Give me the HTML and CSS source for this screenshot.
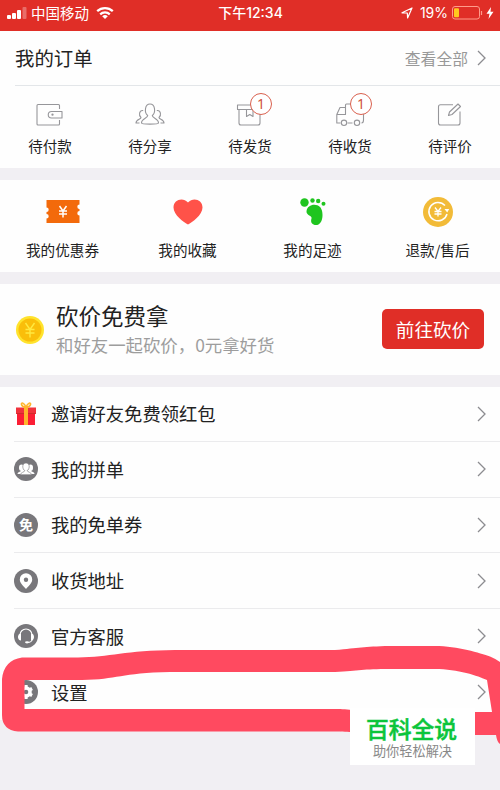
FILE: index.html
```html
<!DOCTYPE html>
<html lang="zh-CN">
<head>
<meta charset="utf-8">
<title>个人中心</title>
<link rel="stylesheet" href="styles.css">
</head>
<body>
<div class="screen">
  <header class="status">
    <div class="status-left">
      <svg width="20" height="12" viewBox="0 0 20 12" fill="#fff"><rect x="0" y="8" width="4" height="4" rx="1"/><rect x="5" y="6" width="4" height="6" rx="1"/><rect x="10" y="3" width="4" height="9" rx="1"/><rect x="15.500" y="0" width="4" height="12" rx="1" opacity=".3"/></svg>
      <span class="carrier">中国移动</span>
      <svg width="18" height="14" viewBox="0 0 18 14" fill="none" stroke="#fff" stroke-width="2.300"><path d="M1.200 5.200a11.500 11.500 0 0 1 15.600 0M4.200 8.300a7.200 7.200 0 0 1 9.600 0"/><path d="M9 13L6.200 10.300a4 4 0 0 1 5.600 0z" fill="#fff" stroke="none"/></svg>
    </div>
    <span class="clock">下午12:34</span>
    <div class="status-right">
      <svg width="12" height="12" viewBox="0 0 12 12" fill="none" stroke="#fff" stroke-width="1.200" stroke-linejoin="round"><path d="M1 5.800L11 1L6.600 11L6.300 6z"/></svg>
      <span class="percent">19%</span>
      <svg width="31" height="14" viewBox="0 0 31 14"><rect x=".5" y=".5" width="27" height="12.500" rx="2.500" fill="none" stroke="#ff9b8b"/><rect x="2" y="2.300" width="5" height="9" rx="1" fill="#ffc81e"/><path d="M29.500 5v4" stroke="#ff9b8b" stroke-width="1.200"/></svg>
      <svg width="8" height="12" viewBox="0 0 8 12"><path d="M5 0L.5 6.700H3.500L2.500 12L7.500 4.800H4.500z" fill="#fff"/></svg>
    </div>
  </header>

  <section class="orders">
    <div class="orders-head">
      <h2>我的订单</h2>
      <a class="all">查看全部<svg class="chevron" viewBox="0 0 9 16"><path d="M1 1l7 7-7 7"/></svg></a>
    </div>
    <div class="order-grid">
      <div class="order"><svg class="line-icon" viewBox="0 0 30 26"><path d="M24.500 7V3.500q0-1-1-1H3q-1 0-1 1v18.500q0 1 1 1h20.500q1 0 1-1v-4M24 9.500h-7.500a3.200 3.200 0 0 0 0 6.500H27V9.500z"/><circle cx="17.500" cy="12.700" r=".6"/></svg><span>待付款</span></div>
      <div class="order"><svg class="line-icon" viewBox="0 0 30 26"><path d="M12.700 13.500C9 10.500 9.800 2 15 2s6 8.500 2.300 11.500c0 3 6.200 2.500 6.200 7.500 0 1.500-17 1.500-17 0 0-5 6.200-4.500 6.200-7.500zM8.200 8.500C4 8 3.500 13.500 6 15.500 6 17.500 1 17 1 21h3.500M21.800 8.500c4.200-.5 4.700 5 2.200 7 0 2 5 1.500 5 5.500h-3.500"/></svg><span>待分享</span></div>
      <div class="order"><svg class="line-icon" viewBox="0 0 30 26"><path d="M2.500 3h24v4.500h-24zM4 7.500V21q0 2 2 2h17q2 0 2-2V7.500M11.500 7.500v7l3.300-2 3.200 2v-7"/></svg><i class="badge">1</i><span>待发货</span></div>
      <div class="order"><svg class="line-icon" viewBox="0 0 30 26"><path d="M5.500 21H1.800v-8.500L5 5.500h5.500V3q0-1 1-1H28.500v16q0 3-2 3M10.500 5.500v7H2M12.500 21h5"/><circle cx="9" cy="20.800" r="2.700"/><circle cx="22" cy="20.800" r="2.700"/></svg><i class="badge">1</i><span>待收货</span></div>
      <div class="order"><svg class="line-icon" viewBox="0 0 30 26"><path d="M18 2.800H5.500q-2 0-2 2V21q0 2 2 2H23q2 0 2-2V9.500M13.500 13.500l1-3.500 8.500-8 2.500 2.500-8.500 8z"/></svg><span>待评价</span></div>
    </div>
  </section>

  <section class="tools">
    <div class="tool"><svg viewBox="0 0 36 32"><path d="M1.500 4h33v4.500a2.200 2.200 0 0 0 0 4.400v2.200a2.200 2.200 0 0 0 0 4.400V27h-33v-4.500a2.200 2.200 0 0 0 0-4.400v-2.200a2.200 2.200 0 0 0 0-4.400z" fill="#f36a0b"/><path d="M14.500 10l3.500 5 3.500-5M14 15h8M14 18h8M18 15v6.500" fill="none" stroke="#fff" stroke-width="1.500"/></svg><span>我的优惠券</span></div>
    <div class="tool"><svg viewBox="0 0 36 32"><path d="M18 28.500C14 26.500 3.500 19 3.500 11.500 3.500 3.500 13 1 18 6.500 23 1 32.500 3.500 32.500 11.500 32.500 19 22 26.500 18 28.500z" fill="#ff5249"/></svg><span>我的收藏</span></div>
    <div class="tool"><svg viewBox="0 0 36 32" fill="#1fc51f"><circle cx="9.500" cy="6.500" r="4.200"/><circle cx="17.500" cy="4.500" r="2.200"/><circle cx="23.200" cy="5" r="2.200"/><circle cx="28.500" cy="7.700" r="2"/><path d="M11.500 15.500C12 8.500 21 7 25 11c4 4 3.500 17-3 18-4 .5-7-2-5.500-6.500 1-3-5.300-3-5-7z"/></svg><span>我的足迹</span></div>
    <div class="tool"><svg viewBox="0 0 36 32"><circle cx="18" cy="16" r="15" fill="#f2bb38"/><path d="M25 9.500A9.200 9.200 0 1 0 27 18" fill="none" stroke="#fff" stroke-width="1.500"/><path d="M24.500 13h4.700l-2 3.500z" fill="#fff"/><path d="M15 11.500l3 4 3-4M14.500 15.500h7M14.500 18h7M18 15.500v5" fill="none" stroke="#fff" stroke-width="1.300"/></svg><span>退款/售后</span></div>
  </section>

  <section class="bargain">
    <svg class="coin" viewBox="0 0 30 30"><circle cx="15" cy="15" r="14" fill="#ffe32d"/><circle cx="15" cy="15" r="11.500" fill="#fabe0a"/><path d="M10.500 8l4.500 6.500L19.500 8M10.500 14.500h9M10.500 18h9M15 14.500V22.500" fill="none" stroke="#ffe940" stroke-width="1.400"/></svg>
    <div class="bargain-text"><h3>砍价免费拿</h3><p>和好友一起砍价，0元拿好货</p></div>
    <button class="go">前往砍价</button>
  </section>

  <section class="menu">
    <div class="item"><svg class="item-icon" viewBox="0 0 24 24"><path d="M2 5.500h20V12H2z" fill="#f0323c"/><path d="M3 12h18v11H3z" fill="#fb1e35"/><path d="M2.500 11.500h19" stroke="#cf2c2c"/><path d="M10 5.500h4V23h-4z" fill="#ffb52c"/><path d="M12 5C10 .5 7 0 7.500 2.500S11 5 12 5.500C13 5 16 5 16.500 2.500S14 .5 12 5z" fill="none" stroke="#ffb52c" stroke-width="1.600"/></svg><span>邀请好友免费领红包</span><svg class="chevron" viewBox="0 0 9 16"><path d="M1 1l7 7-7 7"/></svg></div>
    <div class="item"><svg class="item-icon" viewBox="0 0 24 24"><circle cx="12" cy="12" r="12" fill="#78777b"/><g fill="#fff"><ellipse cx="7.500" cy="10.800" rx="2.500" ry="3.200"/><path d="M3.500 17c0-2.500 4-2 4-4h3v4z"/><ellipse cx="16.500" cy="10.800" rx="2.500" ry="3.200"/><path d="M20.500 17c0-2.500-4-2-4-4h-3v4z"/><path d="M10.700 13.500C7.500 11 8.500 6 12 6s4.500 5 1.300 7.500c0 2 4.200 1.500 4.200 4.200h-11c0-2.700 4.200-2.200 4.200-4.200z" stroke="#78777b" stroke-width=".6"/></g></svg><span>我的拼单</span><svg class="chevron" viewBox="0 0 9 16"><path d="M1 1l7 7-7 7"/></svg></div>
    <div class="item"><b class="item-icon free">免</b><span>我的免单券</span><svg class="chevron" viewBox="0 0 9 16"><path d="M1 1l7 7-7 7"/></svg></div>
    <div class="item"><svg class="item-icon" viewBox="0 0 24 24"><circle cx="12" cy="12" r="12" fill="#78777b"/><path d="M12 20C10 17.500 5.800 14.500 5.800 10.500a6.200 6.200 0 0 1 12.400 0C18.200 14.500 14 17.500 12 20z" fill="#fff"/><circle cx="12" cy="10.700" r="2.200" fill="#78777b"/></svg><span>收货地址</span><svg class="chevron" viewBox="0 0 9 16"><path d="M1 1l7 7-7 7"/></svg></div>
    <div class="item"><svg class="item-icon" viewBox="0 0 24 24"><circle cx="12" cy="12" r="12" fill="#78777b"/><path d="M6 11a6 6 0 0 1 12 0M18.500 14.500q-.5 4-5 4" fill="none" stroke="#fff" stroke-width="1.100"/><path d="M7 9.500v7C3 16.500 3 9.500 7 9.500zM17 9.500v7c4 0 4-7 0-7z" fill="#fff"/><ellipse cx="13" cy="18.300" rx="2" ry="1.100" fill="#fff"/></svg><span>官方客服</span><svg class="chevron" viewBox="0 0 9 16"><path d="M1 1l7 7-7 7"/></svg></div>
    <div class="item"><svg class="item-icon" viewBox="0 0 24 24"><circle cx="12" cy="12" r="12" fill="#78777b"/><g fill="none" stroke="#fff"><circle cx="12" cy="12" r="4.100" stroke-width="3.400"/><path d="M12 5v14M5.900 8.500l12.200 7M5.900 15.500l12.200-7" stroke-width="3.300"/></g><circle cx="12" cy="12" r="2.300" fill="#78777b"/></svg><span>设置</span><svg class="chevron" viewBox="0 0 9 16"><path d="M1 1l7 7-7 7"/></svg></div>
  </section>

  <svg class="marker" viewBox="0 0 500 790"><path fill-rule="evenodd" fill="#ff4a60" d="M22 657.500H78C110 657 125 650.500 175 650H335C360 648 362 646.500 390 646H435C458 646 480 653 490 656.500Q496 659 500 662V744Q497 742 496 735H385C355 733 350 731.500 335 731.500H18Q2 730 2 715V679Q4 660 22 657.500zM24.500 680H82C118 679.500 120 673 170 672H335C360 670.500 362 669 390 669H435C458 669 478 676 487 680L492 712H385C355 711 350 709 335 709H24.500z"/></svg>
  <aside class="watermark"><strong>百科全说</strong><span>助你轻松解决</span></aside>
</div>
</body>
</html>
```
FILE: styles.css
```css
* { box-sizing: border-box; }
body { margin: 0; font-family: "Noto Sans CJK SC", sans-serif; color: #222; }
h2, h3, p { margin: 0; font-weight: 400; }
svg { display: block; flex: none; }
.screen { position: relative; width: 500px; height: 790px; background: #f1eff3; overflow: hidden; }

.status { height: 31px; padding: 0 6px 5px 7px; display: grid; grid-template-columns: 1fr auto 1fr; align-items: center; background: #e02e27; color: #fff; font-size: 14.5px; line-height: 20px; }
.status-left, .status-right { display: flex; align-items: center; }
.carrier { margin: -1px 7px 0 4px; }
.clock { font-family: Inter, "Noto Sans CJK SC", sans-serif; font-size: 14px; font-weight: 500; }
.status-right { justify-content: flex-end; }
.percent { margin: 0 4px 0 7px; font-family: Inter, sans-serif; font-size: 14px; }
.status-right svg:last-child { margin-left: 3px; }

.chevron { width: 9px; height: 16px; fill: none; stroke: #8c8c90; stroke-width: 1.3; }

.orders { height: 137px; background: #fefefe; }
.orders-head { height: 55px; margin-left: 15px; padding-right: 14px; display: flex; align-items: center; justify-content: space-between; border-bottom: 1px solid #e3e6e9; }
.orders-head h2 { font-size: 19.4px; line-height: 28px; }
.all { display: flex; align-items: center; gap: 9px; font-size: 15.8px; color: #999; }
.order-grid { display: grid; grid-template-columns: repeat(5, 1fr); }
.order { position: relative; display: flex; flex-direction: column; align-items: center; padding-top: 16px; font-size: 14.5px; line-height: 22px; }
.order span { margin-top: 7px; }
.line-icon { width: 30px; height: 26px; fill: none; stroke: #96969a; stroke-width: 1.1; stroke-linejoin: round; }
.badge { position: absolute; left: 50px; top: 7px; width: 22px; height: 22px; border: 1.4px solid #d9604e; border-radius: 50%; background: #fff; color: #d0503c; font: 400 14px/20px "Noto Sans", sans-serif; text-align: center; }

.tools { height: 92px; margin-top: 12px; display: grid; grid-template-columns: repeat(4, 1fr); background: #fefefe; }
.tool { display: flex; flex-direction: column; align-items: center; padding-top: 16px; font-size: 14.6px; line-height: 22px; }
.tool svg { width: 36px; height: 32px; }
.tool span { margin-top: 11px; }

.bargain { height: 91px; margin-top: 12px; padding: 0 16px 2px 15px; display: flex; align-items: center; background: #fefefe; }
.coin { width: 30px; height: 30px; margin-top: 2px; }
.bargain-text { margin-left: 11px; flex: 1; }
.bargain h3 { font-size: 22.5px; line-height: 32px; }
.bargain p { font-size: 17.4px; line-height: 28px; color: #9d9d9d; }
.go { width: 102px; height: 40px; padding: 0; border: 0; border-radius: 5px; background: #e02e27; color: #fff; font: 400 18.6px/38px "Noto Sans CJK SC", sans-serif; }

.menu { margin-top: 11.5px; background: #fefefe; }
.item { height: 55.6px; margin-left: 14px; padding-right: 14px; display: flex; align-items: center; border-bottom: 1px solid #ebebed; }
.item:last-child { border-bottom: 0; }
.item span { flex: 1; margin: -1px 0 0 13px; font-size: 18.3px; line-height: 28px; }
.item-icon { width: 24px; height: 24px; }
.free { border-radius: 50%; background: #78777b; color: #fff; font-size: 14px; line-height: 23px; text-align: center; }

.marker { position: absolute; left: 0; top: 0; width: 500px; height: 790px; }
.watermark { position: absolute; left: 350px; top: 708px; width: 125px; height: 57px; padding-top: 9px; display: flex; flex-direction: column; align-items: center; background: #fff; }
.watermark strong { margin-left: -2px; font-size: 22.8px; font-weight: 500; line-height: 24px; color: #0bc53b; -webkit-text-stroke: .5px #0bc53b; }
.watermark span { margin-top: 2px; font-size: 13.2px; line-height: 16px; color: #888; }
```
